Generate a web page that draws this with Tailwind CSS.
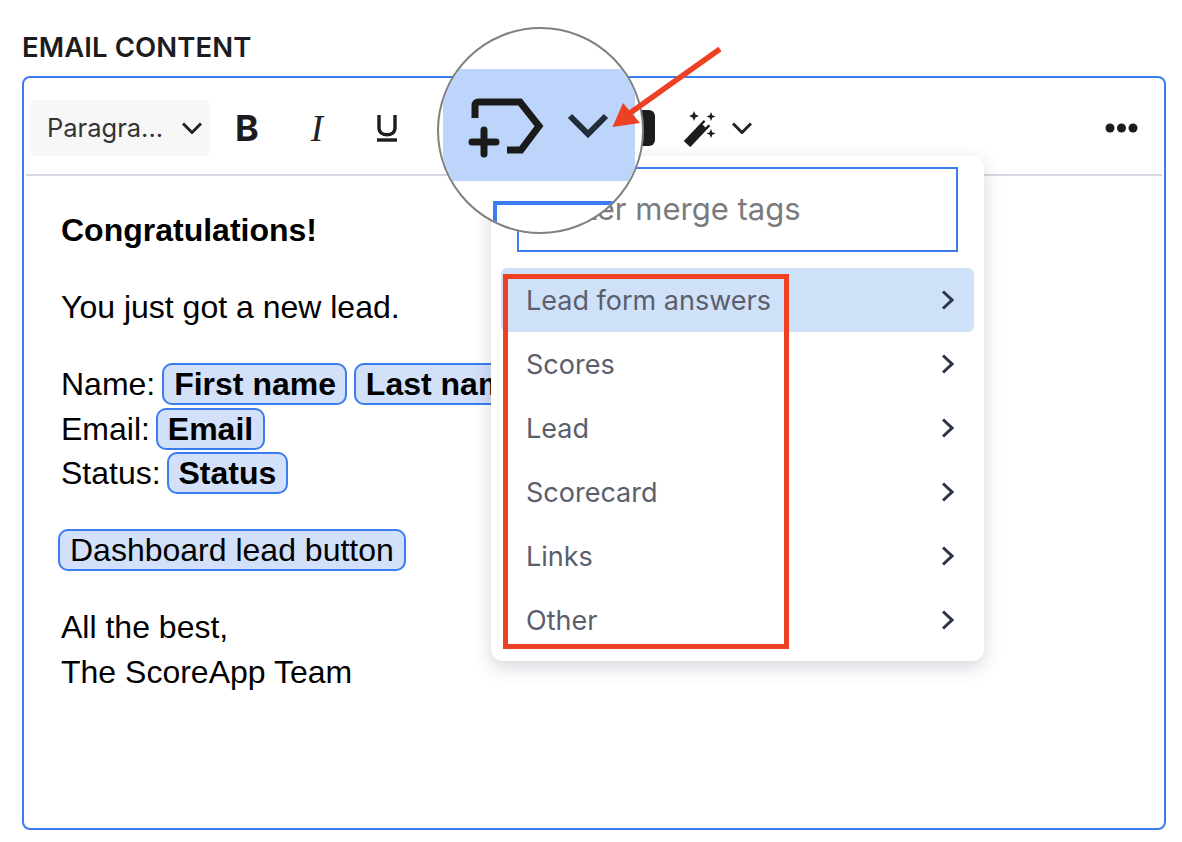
<!DOCTYPE html>
<html lang="en">
<head>
  <meta charset="UTF-8">
  <title>Email content</title>
  <script src="https://cdn.jsdelivr.net/npm/@tailwindcss/browser@4"></script>
</head>
<body class="bg-white">
<div class="relative w-[1182px] h-[842px] overflow-hidden px-[22px] pt-[30px] font-['Inter',sans-serif]">
  <h2 class="text-[27.500px] leading-[34px] font-semibold text-[#1c1c1e] tracking-[0.1px]">EMAIL CONTENT</h2>

  <!-- editor -->
  <div class="mt-[12px] w-[1144px] h-[754px] border-2 border-[#3b7cf0] rounded-lg">
    <div class="mx-[2px] h-[98px] border-b-2 border-[#d5d9e2] flex items-center pl-[4px] pr-[24px] pt-[4px]">
      <div class="w-[180px] h-[56px] bg-[#f7f7f7] rounded-md flex items-center justify-between pl-[17px] pr-[8px] text-[25.500px] text-[#333]">
        <span>Paragra...</span>
        <svg class="w-[20px] h-[12px]" viewBox="0 0 20 12" fill="none" stroke="#222" stroke-width="3"><path d="M1 1.500l9 9 9-9"/></svg>
      </div>
      <button class="w-[70px] ml-[2px] text-center text-[36px] leading-none font-bold text-[#1c1c1e]">B</button>
      <button class="w-[70px] text-center text-[37px] leading-none italic font-['Liberation_Serif',serif] text-[#222]">I</button>
      <button class="w-[70px] flex justify-center">
        <svg class="w-[22px] h-[28px]" viewBox="0 0 22 28" fill="none" stroke="#1c1c1e" stroke-width="3.400"><path d="M3 1v13c0 9 16 9 16 0V1"/><path d="M1 26h20"/></svg>
      </button>
      <div class="ml-[217px] w-[16px] h-[36px] bg-[#1c1c1e] rounded-r-md"></div>
      <svg class="ml-[28px] w-[38px] h-[38px]" viewBox="0 0 38 38">
        <path d="M4 35L24 14" stroke="#1c1c1e" stroke-width="9" fill="none"/>
        <path d="M21 17L26 12" stroke="#fff" stroke-width="4" fill="none"/>
        <path d="M11 2l1.500 3.500L16 7l-3.500 1.500L11 12 9.500 8.500 6 7l3.500-1.500zM28 3l1.300 3.200L32.500 7.500l-3.200 1.300L28 12l-1.300-3.200L23.500 7.500l3.200-1.300zM28 20l1.300 3.200 3.200 1.300-3.200 1.300L28 29l-1.300-3.200-3.200-1.300 3.200-1.300z" fill="#1c1c1e"/>
      </svg>
      <svg class="ml-[11px] w-[20px] h-[12px]" viewBox="0 0 20 12" fill="none" stroke="#222" stroke-width="3"><path d="M1 1.500l9 9 9-9"/></svg>
      <svg class="ml-auto w-[33px] h-[10px]" viewBox="0 0 33 10" fill="#1c1c1e"><circle cx="5" cy="5" r="4.500"/><circle cx="16.500" cy="5" r="4.500"/><circle cx="28" cy="5" r="4.500"/></svg>
    </div>

    <div class="pt-[32px] pl-[37px] text-[32px] leading-[44.500px] text-black font-['Liberation_Sans',sans-serif]">
      <p class="font-bold">Congratulations!</p>
      <p class="mt-[32.500px]">You just got a new lead.</p>
      <p class="mt-[32.500px]">
        Name: <span class="-ml-[2px] font-bold bg-[#d2e1f9] border-2 border-[#3b7cf0] rounded-[10px] pl-[10px] pr-[9px] py-[1px]">First name</span>
        <span class="-ml-[2px] font-bold bg-[#d2e1f9] border-2 border-[#3b7cf0] rounded-[10px] pl-[10px] pr-[9px] py-[1px]">Last name</span><br>
        Email: <span class="-ml-[3px] font-bold bg-[#d2e1f9] border-2 border-[#3b7cf0] rounded-[10px] pl-[10px] pr-[10px] py-[1px]">Email</span><br>
        Status: <span class="-ml-[3px] font-bold bg-[#d2e1f9] border-2 border-[#3b7cf0] rounded-[10px] pl-[10px] pr-[10px] py-[1px]">Status</span>
      </p>
      <p class="mt-[32.500px]"><span class="-ml-[3px] bg-[#d2e1f9] border-2 border-[#3b7cf0] rounded-[10px] px-[10px] py-[1px]">Dashboard lead button</span></p>
      <p class="mt-[32.500px]">All the best,<br>The ScoreApp Team</p>
    </div>
  </div>

  <!-- merge tags menu -->
  <div class="absolute left-[491px] top-[156px] w-[493px] h-[505px] bg-white rounded-xl shadow-[0_6px_18px_rgba(60,70,90,0.22)] px-[10px] pt-[11px]">
    <div class="ml-[16px] w-[441px] h-[85px] border-2 border-[#3b7cf0] bg-white flex items-center pl-[31px] text-[31px] text-[#7b7b7b]">Enter merge tags</div>
    <ul class="mt-[16px] text-[27px] text-[#5b5e6b]">
      <li class="h-[64px] flex items-center justify-between pl-[25px] pr-[20px] bg-[#cfe1f8] rounded-md"><span class="mt-[2px]">Lead form answers</span>
        <svg class="w-[13px] h-[20px]" viewBox="0 0 13 20" fill="none" stroke="#2a3547" stroke-width="3"><path d="M2 1.500l9 8.500-9 8.500"/></svg></li>
      <li class="h-[64px] flex items-center justify-between pl-[25px] pr-[20px]"><span class="mt-[2px]">Scores</span>
        <svg class="w-[13px] h-[20px]" viewBox="0 0 13 20" fill="none" stroke="#2a3547" stroke-width="3"><path d="M2 1.500l9 8.500-9 8.500"/></svg></li>
      <li class="h-[64px] flex items-center justify-between pl-[25px] pr-[20px]"><span class="mt-[2px]">Lead</span>
        <svg class="w-[13px] h-[20px]" viewBox="0 0 13 20" fill="none" stroke="#2a3547" stroke-width="3"><path d="M2 1.500l9 8.500-9 8.500"/></svg></li>
      <li class="h-[64px] flex items-center justify-between pl-[25px] pr-[20px]"><span class="mt-[2px]">Scorecard</span>
        <svg class="w-[13px] h-[20px]" viewBox="0 0 13 20" fill="none" stroke="#2a3547" stroke-width="3"><path d="M2 1.500l9 8.500-9 8.500"/></svg></li>
      <li class="h-[64px] flex items-center justify-between pl-[25px] pr-[20px]"><span class="mt-[2px]">Links</span>
        <svg class="w-[13px] h-[20px]" viewBox="0 0 13 20" fill="none" stroke="#2a3547" stroke-width="3"><path d="M2 1.500l9 8.500-9 8.500"/></svg></li>
      <li class="h-[64px] flex items-center justify-between pl-[25px] pr-[20px]"><span class="mt-[2px]">Other</span>
        <svg class="w-[13px] h-[20px]" viewBox="0 0 13 20" fill="none" stroke="#2a3547" stroke-width="3"><path d="M2 1.500l9 8.500-9 8.500"/></svg></li>
    </ul>
  </div>

  <!-- red highlight around the list -->
  <div class="absolute left-[503px] top-[274px] w-[286px] h-[375px] border-[5px] border-[#ee4023]"></div>

  <!-- magnifier -->
  <div class="absolute left-[437px] top-[27px] w-[207px] h-[207px] rounded-full border-2 border-[#808080] bg-white overflow-hidden">
    <div class="absolute left-[4px] top-[40px] w-[192px] h-[112px] bg-[#bdd5fa] rounded-sm"></div>
    <div class="absolute left-[54px] top-[172px] w-[200px] h-[100px] border-l-4 border-t-4 border-[#3b7cf0]"></div>
    <svg class="absolute left-0 top-0" width="203" height="203" viewBox="438 28 203 203" fill="none">
      <path d="M474 117V105q0-4 4-4h41l19 24-18 24h-14" stroke="#1a1a1a" stroke-width="7"/>
      <path d="M471 141h24M483 129v24" stroke="#1a1a1a" stroke-width="7" stroke-linecap="round"/>
      <path d="M569 115l18 18 18-18" stroke="#222d3a" stroke-width="6"/>
    </svg>
  </div>

  <!-- arrow -->
  <svg class="absolute left-0 top-0 pointer-events-none" width="1182" height="842" viewBox="0 0 1182 842">
    <path d="M720 49L630 113" stroke="#ee4023" stroke-width="5.500" fill="none"/>
    <path d="M612.500 127L623 103 640 123z" fill="#ee4023"/>
  </svg>
</div>
</body>
</html>
